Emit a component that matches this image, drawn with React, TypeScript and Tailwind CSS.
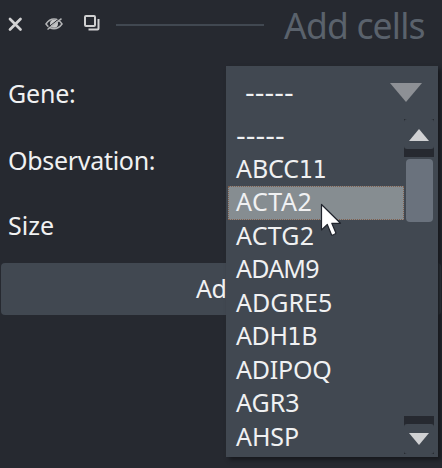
const genes = [
  { name: '-----', track: "font-['DejaVu_Sans',sans-serif] text-[27px] leading-none" },
  { name: 'ABCC11', track: 'tracking-[-0.1px]' },
  { name: 'ACTA2', track: 'tracking-[0.5px]' },
  { name: 'ACTG2', track: 'tracking-[0.2px]' },
  { name: 'ADAM9', track: 'tracking-[-0.8px]' },
  { name: 'ADGRE5', track: 'tracking-[0px]' },
  { name: 'ADH1B', track: 'tracking-[-0.4px]' },
  { name: 'ADIPOQ', track: 'tracking-[-0.2px]' },
  { name: 'AGR3', track: 'tracking-[0px]' },
  { name: 'AHSP', track: 'tracking-[-0.1px]' },
];

function GeneName({ name }: { name: string }) {
  return (
    <span>
      {name.split(/(1)/).map((part, i) =>
        part === '1' ? <span key={i} className="font-['DejaVu_Sans_Condensed','DejaVu_Sans',sans-serif] text-[24.5px] leading-none [font-stretch:condensed]">1</span> : part,
      )}
    </span>
  );
}

function Header() {
  return (
    <header className="flex h-[47px] items-center">
      <svg className="ml-2 mt-px h-[15px] w-[15px] shrink-0" viewBox="0 0 15 15" fill="none" stroke="#d2d2d3" strokeWidth="2.7" strokeLinecap="round">
        <path d="M2 2 12.5 12.500M12.500 2 2 12.500" />
      </svg>
      <svg className="ml-[22px] h-[16px] w-[18px] shrink-0" viewBox="0 0 18 16" fill="none" stroke="#b4b5b7" strokeWidth="1.500">
        <path d="M1 8C3.500 4.200 6 3 9 3s5.500 1.200 8 5c-2.500 3.500-5 4.700-8 4.700S3.500 11.500 1 8Z" />
        <circle cx="9" cy="7.800" r="4" fill="#c8c9ca" stroke="none" />
        <path d="M2 12.200 15.500 1.700" stroke="#262930" strokeWidth="1" />
        <path d="M2.500 13.500 16.500 2.700" />
      </svg>
      <svg className="ml-[20px] mb-px h-[18px] w-[18px] shrink-0" viewBox="0 0 18 18" fill="none" stroke="#d0d0d1" strokeWidth="2">
        <rect x="2" y="2" width="10" height="10" rx="1" />
        <path d="M15.500 5v9.500a1 1 0 0 1-1 1H5.500" />
      </svg>
      <div className="ml-[15px] mt-[2px] h-[2px] w-[148px] shrink-0 bg-[#414851]" />
      <h1 className="ml-[20px] mt-[4px] whitespace-nowrap text-[35.5px] leading-[47px] tracking-[-0.8px] text-[#5a626c]">Add cells</h1>
    </header>
  );
}

function ScrollBar() {
  return (
    <div className="mr-1 flex w-[30px] shrink-0 flex-col">
      <div className="h-[30px] bg-[#262930]">
        <div className="flex h-full items-center justify-center rounded-[3px] bg-[#414851]">
          <svg className="mt-[2px] h-3 w-5" viewBox="0 0 20 12"><path d="M0 12 10 0 20 12Z" fill="#d0d1d3" /></svg>
        </div>
      </div>
      <div className="h-[8px] bg-[#262930]" />
      <div className="mx-auto mt-[2px] h-[63px] w-[27px] rounded-[4px] bg-[#6a727d]" />
      <div className="grow" />
      <div className="h-[8px] bg-[#262930]" />
      <div className="mb-[3px] h-[30px] bg-[#262930]">
        <div className="flex h-full items-center justify-center rounded-[3px] bg-[#414851]">
          <svg className="h-3 w-5" viewBox="0 0 20 12"><path d="M0 0 10 12 20 0Z" fill="#d0d1d3" /></svg>
        </div>
      </div>
    </div>
  );
}

export default function App() {
  return (
    <div className="relative h-[468px] w-[442px] overflow-hidden bg-[#262930] font-['Noto_Sans','DejaVu_Sans',sans-serif] text-[25px] text-[#f0f1f2]">
      <Header />
      <div className="flex flex-col pl-2">
        <label className="mt-[13px] h-[67px] leading-[66px] tracking-[-0.2px]">Gene:</label>
        <label className="h-[65px] leading-[66px] tracking-[-0.3px]">Observation:</label>
        <label className="h-[66px] leading-[66px] tracking-[0px]">Size</label>
      </div>
      <button className="absolute left-[1px] top-[263px] h-[52px] w-[440px] rounded-[4px] bg-[#414851] pl-[195px] text-left tracking-[-0.6px]">Add</button>
      <div className="absolute left-[226px] top-[66px] flex h-[391px] w-[212px] flex-col bg-[#414851] shadow-[3px_3px_4px_#17191e]">
        <div className="flex h-[53px] shrink-0 items-center justify-between pl-[19px] pr-[16px]">
          <span className="font-['DejaVu_Sans',sans-serif] text-[27px] leading-none">-----</span>
          <svg className="h-[19px] w-[32px]" viewBox="0 0 32 19"><path d="M0 0H32L16 19Z" fill="#8d9095" /></svg>
        </div>
        <div className="flex min-h-0 grow">
          <ul className="ml-[2px] grow">
            {genes.map((g) => (
              <li key={g.name} className={`flex h-[33.5px] items-center border pb-[1.5px] pl-[7px] ${g.track} ${g.name === 'ACTA2' ? 'border-dotted border-[#80604f] bg-[#868d91]' : 'border-transparent'}`}>
                <GeneName name={g.name} />
              </li>
            ))}
          </ul>
          <ScrollBar />
        </div>
      </div>
      <svg className="absolute left-[320px] top-[203px] h-[36px] w-[24px]" viewBox="0 0 24 36">
        <path d="M1.500 1.500V27l5.800-5.500 4.200 10.300c.4.900 4.800-.900 4.400-1.900L11.800 20.300h8.700Z" fill="#fff" stroke="#20242d" strokeWidth="1.200" strokeLinejoin="round" />
      </svg>
    </div>
  );
}
